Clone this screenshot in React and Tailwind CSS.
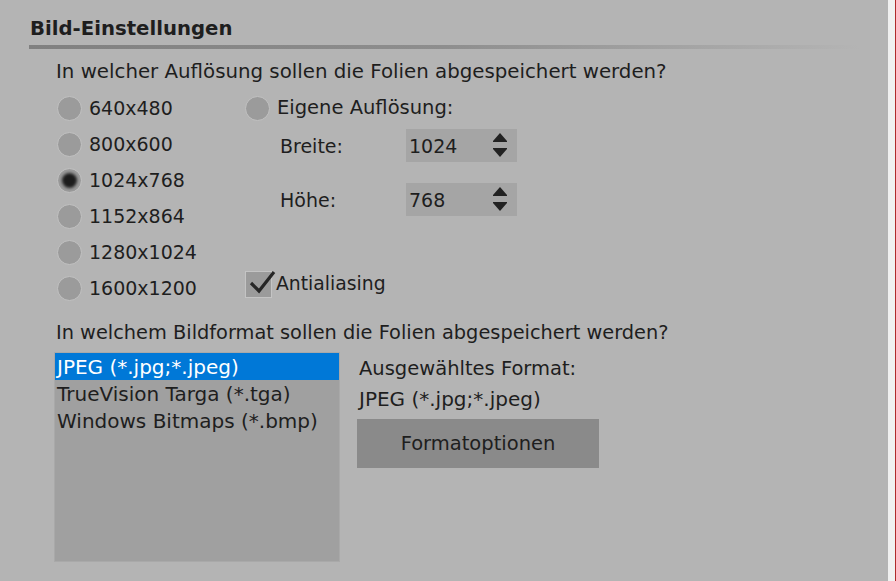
import React from 'react';

const font = { fontFamily: '"DejaVu Sans", Verdana, sans-serif' };

function Radio({ checked }) {
  return (
    <div className="w-[25px] h-[25px] rounded-full bg-[#9b9b9b] border border-[#c2c2c2] flex items-center justify-center shrink-0">
      {checked && <div className="w-[15px] h-[15px] rounded-full bg-[#1c1c1c] blur-[1.5px]" />}
    </div>
  );
}

function Spinner() {
  return (
    <svg width="14" height="25" viewBox="0 0 14 25" className="shrink-0">
      <polygon points="7,0 14,8 14,9 0,9 0,8" fill="#222" />
      <polygon points="0,15 14,15 14,16 7,24 0,16" fill="#222" />
    </svg>
  );
}

function NumField({ value }) {
  return (
    <div className="w-[111px] h-[33px] bg-[#a5a5a5] flex items-center justify-between pl-[3px] pr-[10px]">
      <span>{value}</span>
      <Spinner />
    </div>
  );
}

const sizes = ['640x480', '800x600', '1024x768', '1152x864', '1280x1024', '1600x1200'];
const formats = ['JPEG (*.jpg;*.jpeg)', 'TrueVision Targa (*.tga)', 'Windows Bitmaps (*.bmp)'];

export default function App() {
  return (
    <div className="w-[896px] h-[581px] flex overflow-hidden text-[19px] leading-[24px] text-[#1e1e1e]" style={font}>
      <div className="w-[888px] h-full bg-[#b4b4b4] pt-[17px]">
        <div className="pl-[30px] font-bold text-[19.7px] leading-[24px]">Bild-Einstellungen</div>
        <div className="ml-[29px] mt-[4px] h-[4px] w-[831px] bg-gradient-to-r from-[#808080] via-[#8e8e8e] to-[#b4b4b4]" />

        <div className="pl-[56px] mt-[11px] text-[19.8px]">In welcher Auflösung sollen die Folien abgespeichert werden?</div>

        <div className="flex mt-[6px]">
          <div className="pl-[57px] w-[245px] flex flex-col">
            {sizes.map((s, i) => (
              <div key={s} className="h-[36px] flex items-center gap-[7px]">
                <Radio checked={i === 2} />
                <span>{s}</span>
              </div>
            ))}
          </div>

          <div className="flex flex-col">
            <div className="h-[36px] flex items-center gap-[7px]">
              <Radio />
              <span className="text-[19.5px]">Eigene Auflösung:</span>
            </div>
            <div className="flex items-center mt-[3px] pl-[35px]">
              <span className="w-[126px]">Breite:</span>
              <NumField value="1024" />
            </div>
            <div className="flex items-center mt-[21px] pl-[35px]">
              <span className="w-[126px]">Höhe:</span>
              <NumField value="768" />
            </div>
            <div className="h-[28px] mt-[54px] flex items-center gap-[4px]">
              <div className="relative w-[27px] h-[27px] bg-[#9b9b9b] border border-[#c4c4c4] shrink-0">
                <svg width="28" height="26" viewBox="0 0 28 26" className="absolute left-[2px] top-[-4px]">
                  <polyline points="3,15 11,23 26,4" fill="none" stroke="#262626" strokeWidth="3.2" />
                </svg>
              </div>
              <span className="text-[18.8px]">Antialiasing</span>
            </div>
          </div>
        </div>

        <div className="pl-[56px] mt-[15px] text-[19.35px]">In welchem Bildformat sollen die Folien abgespeichert werden?</div>

        <div className="flex mt-[7px] pl-[54px]">
          <div className="w-[286px] h-[210px] bg-[#a0a0a0] border border-[#a9a9a9] text-[20px]">
            {formats.map((f, i) => (
              <div
                key={f}
                className={i === 0 ? 'h-[27px] flex items-center pl-[2px] bg-[#0078d7] text-white' : 'h-[27px] flex items-center pl-[2px]'}
              >
                {f}
              </div>
            ))}
          </div>

          <div className="ml-[17px] flex flex-col text-[19.5px]">
            <div className="h-[30px] pt-[3px] pl-[2px] flex items-center">Ausgewähltes Format:</div>
            <div className="h-[33px] pl-[2px] flex items-center text-[20px]">JPEG (*.jpg;*.jpeg)</div>
            <button className="mt-[4px] w-[242px] h-[49px] bg-[#8a8a8a] text-[#1e1e1e]">Formatoptionen</button>
          </div>
        </div>
      </div>
      <div className="w-[7px] h-full bg-[#f0f0f0]" />
      <div className="w-px h-full bg-[#b02a2a]" />
    </div>
  );
}
